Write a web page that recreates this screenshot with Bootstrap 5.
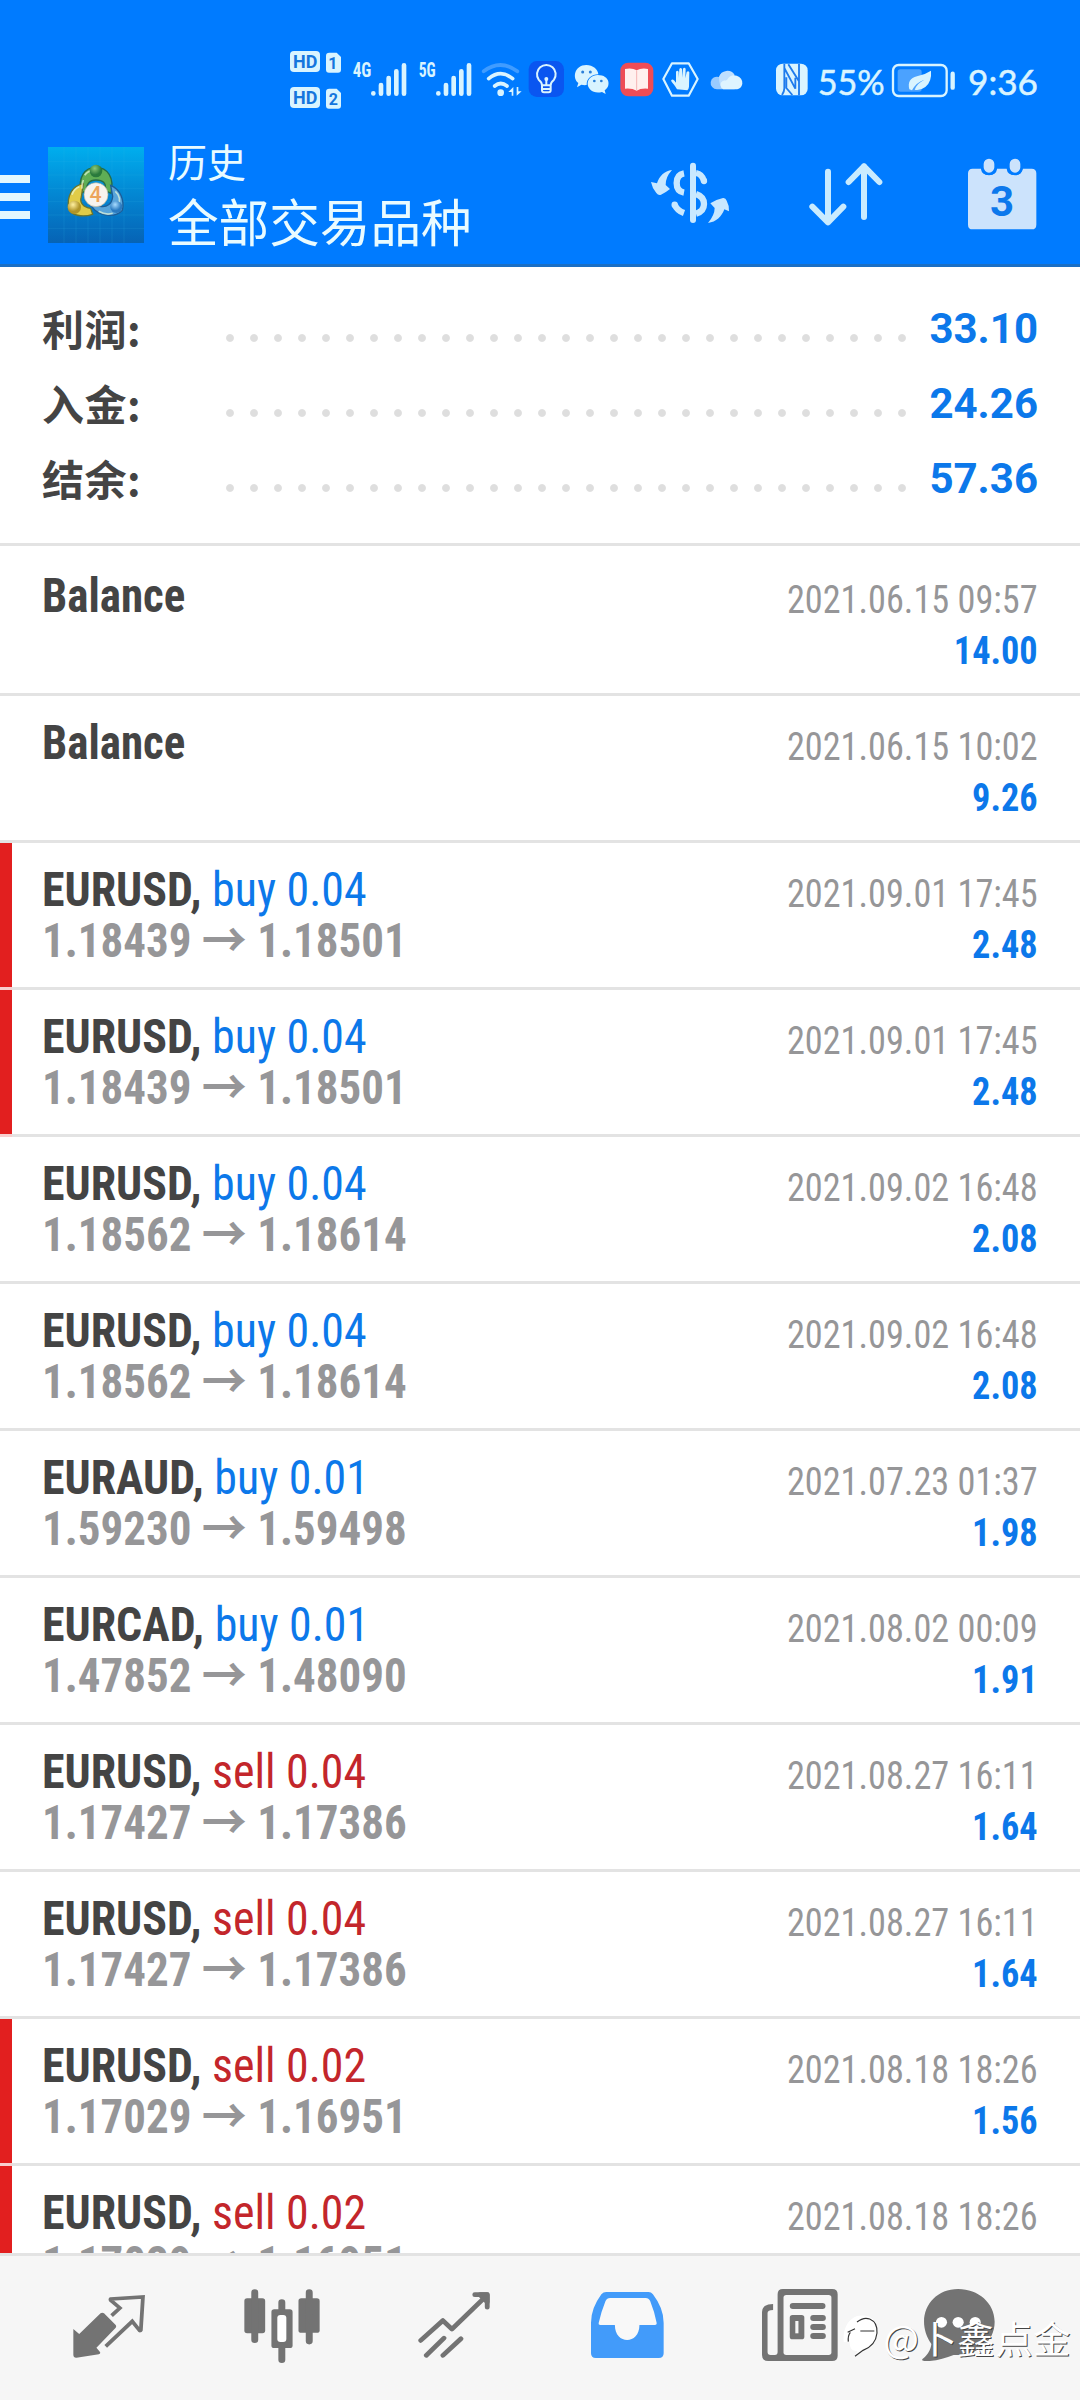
<!DOCTYPE html>
<html lang="zh-CN">
<head>
<meta charset="utf-8">
<meta name="viewport" content="width=device-width, initial-scale=1">
<title>历史</title>
<link href="https://cdn.jsdelivr.net/npm/bootstrap@5.3.0/dist/css/bootstrap.min.css" rel="stylesheet">
<style>
:root{--brand:#007bff;--ice:#d9f1ff;--ink:#444;--mute:#969698;--rule:#e3e3e3;--blue:#0c78ea;--red:#c3262b;--gray:#737373}
body{font-family:Roboto,"Noto Sans CJK SC",sans-serif;color:var(--ink);background:#fff}
svg{display:block;flex:none}
.screen{width:1080px;height:2400px}
.statusbar{height:120px;padding:40px 37px 0 285px;background:var(--brand)}
.topbar{height:147px;background:var(--brand);border-bottom:3px solid #1b6fc4;color:#e9fbff;font-family:"Noto Sans CJK SC",sans-serif}
.burger{width:30px;height:44px;margin-top:10px}
.burger i{height:8px;background:#e2f7ff}
.app-logo{margin:6px 0 0 18px}
.app-title{margin:-5px 0 0 24px;line-height:1;white-space:nowrap}
.title-top{font-size:39px;line-height:60px}
.title-main{font-size:50.6px;line-height:60px}
.summary{height:276px;padding:29px 42px 0 42px}
.sum-line{height:75px}
.sum-label{width:176px;font:700 42px/64px "Noto Sans CJK SC",sans-serif;letter-spacing:.5px}
.dots{width:696px;height:8px;margin-top:9px;background:radial-gradient(circle 4px at 12px 4px,#dedede 3.4px,transparent 4.4px) 0 0/24px 8px repeat-x}
.sum-value{font-weight:700;font-size:42px;line-height:66px;color:var(--blue)}
.deals{border-top:3px solid var(--rule);min-height:0}
.deal{height:147px;border-bottom:3px solid var(--rule);padding:21px 42px 0 42px;white-space:nowrap;font-family:"Roboto Condensed",Roboto,"Noto Sans CJK SC",sans-serif;font-stretch:75%;line-height:51px}
.deal:first-child{height:150px;padding-top:24px}
.marked{position:relative}
.marked::before{content:"";position:absolute;left:0;top:0;width:12px;height:144px;background:#e21f1f}
.marked::after{content:"";position:absolute;left:0;top:144px;width:12px;height:3px;background:#f8cfcf}
.deal-left{font-size:48px;font-weight:700}
.deal-left>div{transform:scaleX(.937);transform-origin:left}
.deal-left>.symbol{transform:scaleX(.956)}
.deal-right{font-size:39px;text-align:right;padding-top:5px;color:var(--mute);transform:scaleX(.93);transform-origin:right}
.deal-left>div,.deal-right>div{height:51px}
.side{font-weight:400}
.buy{color:var(--blue)}.sell{color:var(--red)}
.prices{color:var(--mute)}
.arrow{font-family:"Noto Sans CJK SC";line-height:0}
.gain{font-weight:700;color:var(--blue)}
.tabbar{height:147px;background:#f6f6f6;border-top:3px solid var(--rule);padding:0 21px 0 23px;position:relative;z-index:2}
.tab-item{width:172.6px;padding-top:36px}
.raised{margin-top:-3px}
.tab-chat{padding-right:28px}
.stamp{position:absolute;right:9px;top:54px;color:#fff;font:400 37.500px/54px "Noto Sans CJK SC",sans-serif;letter-spacing:.4px;text-shadow:1px 1px 0 #444}
.stamp svg{margin-right:3px}
</style>
</head>
<body>
<div class="screen d-flex flex-column overflow-hidden">
<div class="statusbar d-flex flex-shrink-0">
  <svg width="62" height="80" viewBox="45 0 186 240"><g fill="#d9f4ff"><rect x="60" y="33" width="90" height="63" rx="12"/><path d="M178 38h22l13 13v38q0 9-9 9h-27q-9 0-9-9V47q0-9 10-9z"/><rect x="60" y="141" width="90" height="63" rx="12"/><path d="M178 146h22l13 13v38q0 9-9 9h-27q-9 0-9-9v-42q0-9 10-9z"/></g><g fill="#1576dd" font-family="Roboto" font-weight="700" font-size="54"><text x="69" y="84" textLength="73" lengthAdjust="spacingAndGlyphs">HD</text><text x="69" y="192" textLength="73" lengthAdjust="spacingAndGlyphs">HD</text><text x="175" y="86" font-size="48">1</text><text x="176" y="194" font-size="48">2</text></g></svg>
  <svg width="65" height="80" viewBox="231 0 195 240" fill="none" stroke="#d9f4ff" stroke-width="14" stroke-linecap="round"><path d="M310 160v.5M333 135v26M356 114v47M379 94v67M402 76v85"/><text x="248" y="111" fill="#d9f4ff" stroke="none" font-family="Roboto Condensed" font-weight="700" font-size="58" textLength="56" lengthAdjust="spacingAndGlyphs">4G</text></svg>
  <svg width="64" height="80" viewBox="426 0 192 240" fill="none" stroke="#d9f4ff" stroke-width="14" stroke-linecap="round"><path d="M505 160v.5M528 135v26M551 114v47M574 94v67M597 76v85"/><text x="446" y="111" fill="#d9f4ff" stroke="none" font-family="Roboto Condensed" font-weight="700" font-size="58" textLength="51" lengthAdjust="spacingAndGlyphs">5G</text></svg>
  <svg width="49" height="80" viewBox="618 0 147 240" fill="none" stroke="#d9f4ff" stroke-width="11" stroke-linecap="round"><path d="M641 94q50-38 101 0" stroke="#409cff"/><path d="M656 116q36-30 72 0M674 138q18-15 37 0"/><circle cx="692" cy="158" r="10" fill="#d9f4ff" stroke="none"/><path d="M715 156l15-15v26h-5v-11zM755 154l-15 13v-26h5v13z" fill="#d9f4ff" stroke="none"/></svg>
  <svg width="44" height="80" viewBox="765 0 132 240"><rect x="776" y="63" width="106" height="108" rx="25" fill="#0a56f0"/><g fill="none" stroke="#d9f4ff" stroke-width="6" stroke-linecap="round"><path d="M816 136q0-9-10-17a28 28 0 1 1 46 0q-10 8-10 17zM816 137v14q0 6 6 6h14q6 0 6-6v-14M817 147h24M829 121v14"/><circle cx="829" cy="117" r="3"/></g></svg>
  <svg width="45" height="80" viewBox="897 0 135 240"><g fill="#d9f4ff"><path d="M949 75c20 0 35 13 36 28-20 0-36 13-35 32-6 1-11 0-16-1l-13 8 4-13c-19-14-12-54 24-54z"/><path d="M983 105c38 0 40 35 21 46l3 11-11-6c-24 7-44-8-43-26 1-14 13-25 30-25z"/></g><g fill="#2a7fd8"><circle cx="938" cy="96" r="4.5"/><circle cx="961" cy="96" r="4.5"/><circle cx="973" cy="123" r="4"/><circle cx="994" cy="123" r="4"/></g></svg>
  <svg width="44" height="80" viewBox="1032 0 132 240"><rect x="1051" y="68" width="99" height="101" rx="24" fill="#ee4c55"/><path d="M1065 87q22-4 35 4 14-8 34-4v59q-22-2-34 6-14-8-35-6z" fill="#fff0ee"/><path d="M1100 91v60" stroke="#f5b5b5" stroke-width="3"/></svg>
  <svg width="47" height="80" viewBox="-36 0 141 240"><path d="M6 70h50l27 47-27 50H6l-26-50z" fill="none" stroke="#d9f4ff" stroke-width="6.5" stroke-linejoin="round"/><path d="M21 148C15 136 8 130 3 122q4-6 9-1l6 7V95q4-6 8 0v19l2-27q4-6 8 0v26l3-27q4-6 8 0l-1 29 4-19q5-5 8 1l-1 43q-1 8-5 11z" fill="#d9f4ff"/></svg>
  <svg width="65" height="80" viewBox="105 0 195 240"><path d="M141 148a19 19 0 1 1 6-37 26 26 0 0 1 47-2q5 8 0 39z" fill="#9acbff"/><path d="M147 111a26 26 0 0 1 47-6l-27 20-6 21q-15-8-14-35z" fill="#bedfff"/><path d="M160 148a14 14 0 0 1-2-25c7-3 12 0 15-6a24 24 0 0 1 44 14c-2 11-10 17-19 17z" fill="#def4ff"/></svg>
  <svg width="42" height="80" viewBox="300 0 126 240"><rect x="318" y="71" width="95" height="95" rx="20" fill="#d9f4ff"/><path d="M343 72v73q0 10-7 20M343 84l33 62V113M355 73l32 51V92M387 72v94M349 112v32l18 21" fill="none" stroke="#1d7bed" stroke-width="5.500"/></svg>
  <svg width="76" height="80" viewBox="426 0 228 240"><text x="443" y="165" font-family="Lato" font-size="107" fill="#d9f4ff" stroke="#d9f4ff" stroke-width="1.500" textLength="201" lengthAdjust="spacingAndGlyphs">55%</text></svg>
  <svg width="72" height="80" viewBox="654 0 216 240"><rect x="683" y="88" width="72" height="67" rx="8" fill="#4ba2ff"/><rect x="669" y="75" width="161" height="93" rx="17" fill="none" stroke="#d9f4ff" stroke-width="7"/><path d="M848 101v42" stroke="#d9f4ff" stroke-width="13" stroke-linecap="round"/><path d="M718 148q-8-31 23-39 24-5 42-17 3 33-17 49-14 11-32 8 8-20 29-30-25 8-37 32z" fill="#d9f4ff"/></svg>
  <svg width="83" height="80" viewBox="870 0 249 240"><text x="894" y="165" font-family="Lato" font-size="107" fill="#d9f4ff" stroke="#d9f4ff" stroke-width="1.500" textLength="210" lengthAdjust="spacingAndGlyphs">9:36</text></svg>
</div>
<header class="topbar d-flex align-items-center flex-shrink-0">
  <div class="burger d-flex flex-column justify-content-between"><i></i><i></i><i></i></div>
  <svg class="app-logo" width="96" height="96" viewBox="24 21 288 288">
    <defs><linearGradient id="lg" x2="0" y2="1"><stop stop-color="#00aeee"/><stop offset=".5" stop-color="#0386d2"/><stop offset="1" stop-color="#0663b5"/></linearGradient>
    <radialGradient id="gg" cx=".4" cy=".3"><stop stop-color="#8cc878"/><stop offset="1" stop-color="#2a7a3c"/></radialGradient>
    <radialGradient id="gy" cx=".4" cy=".3"><stop stop-color="#fff0a0"/><stop offset="1" stop-color="#b09428"/></radialGradient>
    <radialGradient id="gb" cx=".4" cy=".3"><stop stop-color="#a8dcff"/><stop offset="1" stop-color="#2a7ac0"/></radialGradient></defs>
    <path fill="url(#lg)" d="M24 21h288v288H24z"/><path d="M72 21v288M108 21v288M144 21v288M180 21v288M216 21v288M252 21v288M24 65h288M24 105h288M24 145h288M24 185h288M24 225h288M24 265h288" stroke="#39b6e8" stroke-opacity=".25" stroke-width="2"/>
    <g stroke-width="4"><path d="M122 160c-8-50 12-78 46-78s56 30 45 78l-17-8c4-24-8-32-28-32s-30 12-28 32z" fill="#5fae55" stroke="#256b48"/><path d="M130 131c-34 6-50 38-44 75 8 20 40 27 72 17l-6-18c-22-2-34-18-28-34z" fill="#e0cc48" stroke="#69752e"/><path d="M212 136c30 12 42 46 35 75-20 22-60 18-82 0l-17-20 32 8c20 4 36-6 38-30z" fill="#58a4da" stroke="#1c5d98"/></g>
    <path d="M134 106c10-14 18-14 24-11M96 164c4-14 12-20 22-24M226 154c14 12 16 30 8 44M130 120c-4 10-5 18-4 26M176 214c14 8 30 10 42 6" stroke="#e8f8d8" stroke-opacity=".7" fill="none" stroke-width="5"/>
    <circle cx="168" cy="93" r="19" fill="url(#gg)"/><circle cx="103" cy="202" r="20" fill="url(#gy)"/><circle cx="229" cy="201" r="18" fill="url(#gb)"/>
    <circle cx="168" cy="164" r="36" fill="#f7f3ee" stroke="#b9b39a" stroke-width="2"/><text x="167" y="187" text-anchor="middle" font-family="Roboto" font-weight="500" font-size="64" fill="#eca45c">4</text>
  </svg>
  <div class="app-title"><div class="title-top">历史</div><div class="title-main">全部交易品种</div></div>
  <div class="d-flex ms-auto">
    <svg width="130" height="144" viewBox="120 -30 390 432" fill="#c9e8ff"><path d="M216 120q-20 22-19 45l13 12q-12 10-27 17-8 3-14-5-13-16-16-33l18 4c7-22 22-37 45-40zM324 279q20-24 20-45l-13-14q18-12 38-16 8-1 11 8 8 14 7 32l-14-6c-8 22-24 38-49 41z"/><g fill="none" stroke="#c9e8ff" stroke-width="19"><path d="M252 130q-22 4-22 29t22 29M288 129q18 3 24 24" /><path d="M288 192q24 8 24 30t-24 29M252 249q-20-7-28-25"/><path d="M279 107v163" stroke-width="18" stroke-linecap="round"/></g><circle cx="312" cy="153" r="9.5"/><circle cx="224" cy="224" r="9.5"/></svg>
    <svg width="155" height="144" viewBox="510 -30 465 432" fill="none" stroke="#c9ebff" stroke-width="18" stroke-linecap="round" stroke-linejoin="round"><path d="M684 125v152M637 230l47 47 46-47M792 261V109M746 156l46-47 46 47"/></svg>
    <svg width="155" height="144" viewBox="975 -30 465 432"><path d="M1118 116h25q2 19 24 19t24-19h29q2 19 24 19t24-19h27q14 0 14 14v154q0 14-14 14h-177q-14 0-14-14V130q0-14 14-14z" fill="#cce3fc"/><g fill="#cce3fc" stroke="#007bff" stroke-width="8"><rect x="1147" y="82" width="40" height="50" rx="20"/><rect x="1225" y="82" width="40" height="50" rx="20"/></g><text x="1206" y="259" text-anchor="middle" font-family="Roboto" font-weight="700" font-size="126" fill="#0c78ec">3</text></svg>
  </div>
</header>
<section class="summary flex-shrink-0">
  <div class="sum-line d-flex"><div class="sum-label">利润:</div><div class="dots align-self-center"></div><div class="sum-value ms-auto">33.10</div></div>
  <div class="sum-line d-flex"><div class="sum-label">入金:</div><div class="dots align-self-center"></div><div class="sum-value ms-auto">24.26</div></div>
  <div class="sum-line d-flex"><div class="sum-label">结余:</div><div class="dots align-self-center"></div><div class="sum-value ms-auto">57.36</div></div>
</section>
<main class="deals flex-grow-1 overflow-hidden">
  <div class="deal d-flex justify-content-between"><div class="deal-left"><div>Balance</div></div><div class="deal-right"><div>2021.06.15 09:57</div><div class="gain">14.00</div></div></div>
  <div class="deal d-flex justify-content-between"><div class="deal-left"><div>Balance</div></div><div class="deal-right"><div>2021.06.15 10:02</div><div class="gain">9.26</div></div></div>
  <div class="deal marked d-flex justify-content-between"><div class="deal-left"><div class="symbol">EURUSD, <span class="side buy">buy 0.04</span></div><div class="prices">1.18439 <span class="arrow">→</span> 1.18501</div></div><div class="deal-right"><div>2021.09.01 17:45</div><div class="gain">2.48</div></div></div>
  <div class="deal marked d-flex justify-content-between"><div class="deal-left"><div class="symbol">EURUSD, <span class="side buy">buy 0.04</span></div><div class="prices">1.18439 <span class="arrow">→</span> 1.18501</div></div><div class="deal-right"><div>2021.09.01 17:45</div><div class="gain">2.48</div></div></div>
  <div class="deal d-flex justify-content-between"><div class="deal-left"><div class="symbol">EURUSD, <span class="side buy">buy 0.04</span></div><div class="prices">1.18562 <span class="arrow">→</span> 1.18614</div></div><div class="deal-right"><div>2021.09.02 16:48</div><div class="gain">2.08</div></div></div>
  <div class="deal d-flex justify-content-between"><div class="deal-left"><div class="symbol">EURUSD, <span class="side buy">buy 0.04</span></div><div class="prices">1.18562 <span class="arrow">→</span> 1.18614</div></div><div class="deal-right"><div>2021.09.02 16:48</div><div class="gain">2.08</div></div></div>
  <div class="deal d-flex justify-content-between"><div class="deal-left"><div class="symbol">EURAUD, <span class="side buy">buy 0.01</span></div><div class="prices">1.59230 <span class="arrow">→</span> 1.59498</div></div><div class="deal-right"><div>2021.07.23 01:37</div><div class="gain">1.98</div></div></div>
  <div class="deal d-flex justify-content-between"><div class="deal-left"><div class="symbol">EURCAD, <span class="side buy">buy 0.01</span></div><div class="prices">1.47852 <span class="arrow">→</span> 1.48090</div></div><div class="deal-right"><div>2021.08.02 00:09</div><div class="gain">1.91</div></div></div>
  <div class="deal d-flex justify-content-between"><div class="deal-left"><div class="symbol">EURUSD, <span class="side sell">sell 0.04</span></div><div class="prices">1.17427 <span class="arrow">→</span> 1.17386</div></div><div class="deal-right"><div>2021.08.27 16:11</div><div class="gain">1.64</div></div></div>
  <div class="deal d-flex justify-content-between"><div class="deal-left"><div class="symbol">EURUSD, <span class="side sell">sell 0.04</span></div><div class="prices">1.17427 <span class="arrow">→</span> 1.17386</div></div><div class="deal-right"><div>2021.08.27 16:11</div><div class="gain">1.64</div></div></div>
  <div class="deal marked d-flex justify-content-between"><div class="deal-left"><div class="symbol">EURUSD, <span class="side sell">sell 0.02</span></div><div class="prices">1.17029 <span class="arrow">→</span> 1.16951</div></div><div class="deal-right"><div>2021.08.18 18:26</div><div class="gain">1.56</div></div></div>
  <div class="deal marked d-flex justify-content-between"><div class="deal-left"><div class="symbol">EURUSD, <span class="side sell">sell 0.02</span></div><div class="prices">1.17029 <span class="arrow">→</span> 1.16951</div></div><div class="deal-right"><div>2021.08.18 18:26</div><div class="gain">1.56</div></div></div>
</main>
<nav class="tabbar d-flex flex-shrink-0">
  <div class="tab-item d-flex justify-content-center"><svg width="72" height="70" viewBox="215 456 209 210" preserveAspectRatio="none"><path d="M216 567l17 15 62-62q5-4 10 0l34 35q3 4 0 8l-56 60 11 14q1 5-4 6l-65 10q-9 1-9-7z" fill="#737373"/><path d="M327 527l24-23-27-24q-1-2 1-3l93-6-6 99q-2 3-4 1l-21-27-77 75" fill="none" stroke="#737373" stroke-width="11"/></svg></div>
  <div class="tab-item d-flex justify-content-center"><svg class="raised" width="76" height="74" viewBox="708 446 219 223" preserveAspectRatio="none" fill="#737373"><rect x="709" y="474" width="60" height="105" rx="8"/><rect x="865" y="474" width="61" height="104" rx="8"/><path d="M739 457v142M896 457v146M817 487v25M817 618v41" stroke="#737373" stroke-width="20" stroke-linecap="round"/><rect x="787" y="507" width="61" height="117" rx="8"/><rect x="804" y="524" width="26" height="82" rx="9" fill="#fff"/></svg></div>
  <div class="tab-item d-flex justify-content-center"><svg width="72" height="66" viewBox="1213 456 208 199" preserveAspectRatio="none" fill="none" stroke="#737373" stroke-width="14" stroke-linecap="round" stroke-linejoin="round"><path d="M1221 602l64-60 26 26 101-102M1377 464h36v38M1237 647l51-52M1285 647l52-50" /><path d="M1392 464h21v22z" fill="#737373"/></svg></div>
  <div class="tab-item d-flex justify-content-center"><svg width="73" height="66" viewBox="146 456 211 198" preserveAspectRatio="none"><path d="M190 456h122q8 0 13 7 31 42 31 85v92q0 14-14 14H160q-14 0-14-14v-92q0-43 30-85 6-7 14-7z" fill="#429bfa"/><path d="M201 474h103q9 0 13 9 12 30 19 67 0 5-5 5h-45c0 60-71 60-71 0h-42q-6 0-5-5 7-34 20-67 4-9 13-9z" fill="#f8f8f8"/></svg></div>
  <div class="tab-item d-flex justify-content-center"><svg class="raised" width="76" height="72" viewBox="646 447 219 216" preserveAspectRatio="none"><path d="M706 447h142q16 0 16 16v184q0 16-16 16H664q-18 0-18-18V516q0-24 32-24v18q-16 0-16 9v117q0 9 9 9h12q8 0 8-9V463q0-16 15-16z" fill="#737373"/><rect x="708" y="465" width="138" height="180" rx="8" fill="#f6f6f6"/><path d="M735 498h85M794 534h27M794 561h27M794 588h27" stroke="#737373" stroke-width="18" stroke-linecap="round"/><rect x="726" y="525" width="42" height="73" rx="8" fill="#737373"/><path d="M742 543h9v37h-9z" fill="#f6f6f6"/></svg></div>
  <div class="tab-item tab-chat d-flex justify-content-center"><svg class="raised" width="73" height="72" viewBox="1109 447 210 216" preserveAspectRatio="none"><path d="M1213 447c58 0 105 42 105 98 0 62-53 103-118 100-25 10-55 20-84 18-9-1-8-5-2-9 11-10 20-24 22-42-50-76-6-165 77-165z" fill="#737373"/><g fill="#fff"><circle cx="1165" cy="547" r="16"/><circle cx="1213" cy="547" r="16"/><circle cx="1262" cy="547" r="16"/></g></svg></div>
  <div class="stamp d-flex align-items-center"><svg width="38" height="50" viewBox="40 115 114 150"><path d="M42 205q-4-60 40-78 58-10 62 45-2 48-48 62l-20 16 7-18q-24 2-23-28z" fill="#fff"/><path d="M82 145q20-16 38-9 24 10 22 42-4 38-42 52l-24 18M54 176l22-11M62 176q-8 10-6 28M92 172h42" fill="none" stroke="#333" stroke-width="3.500"/></svg><span>@卜鑫点金</span></div>
</nav>
</div>
<script src="https://cdn.jsdelivr.net/npm/bootstrap@5.3.0/dist/js/bootstrap.bundle.min.js"></script>
</body>
</html>
